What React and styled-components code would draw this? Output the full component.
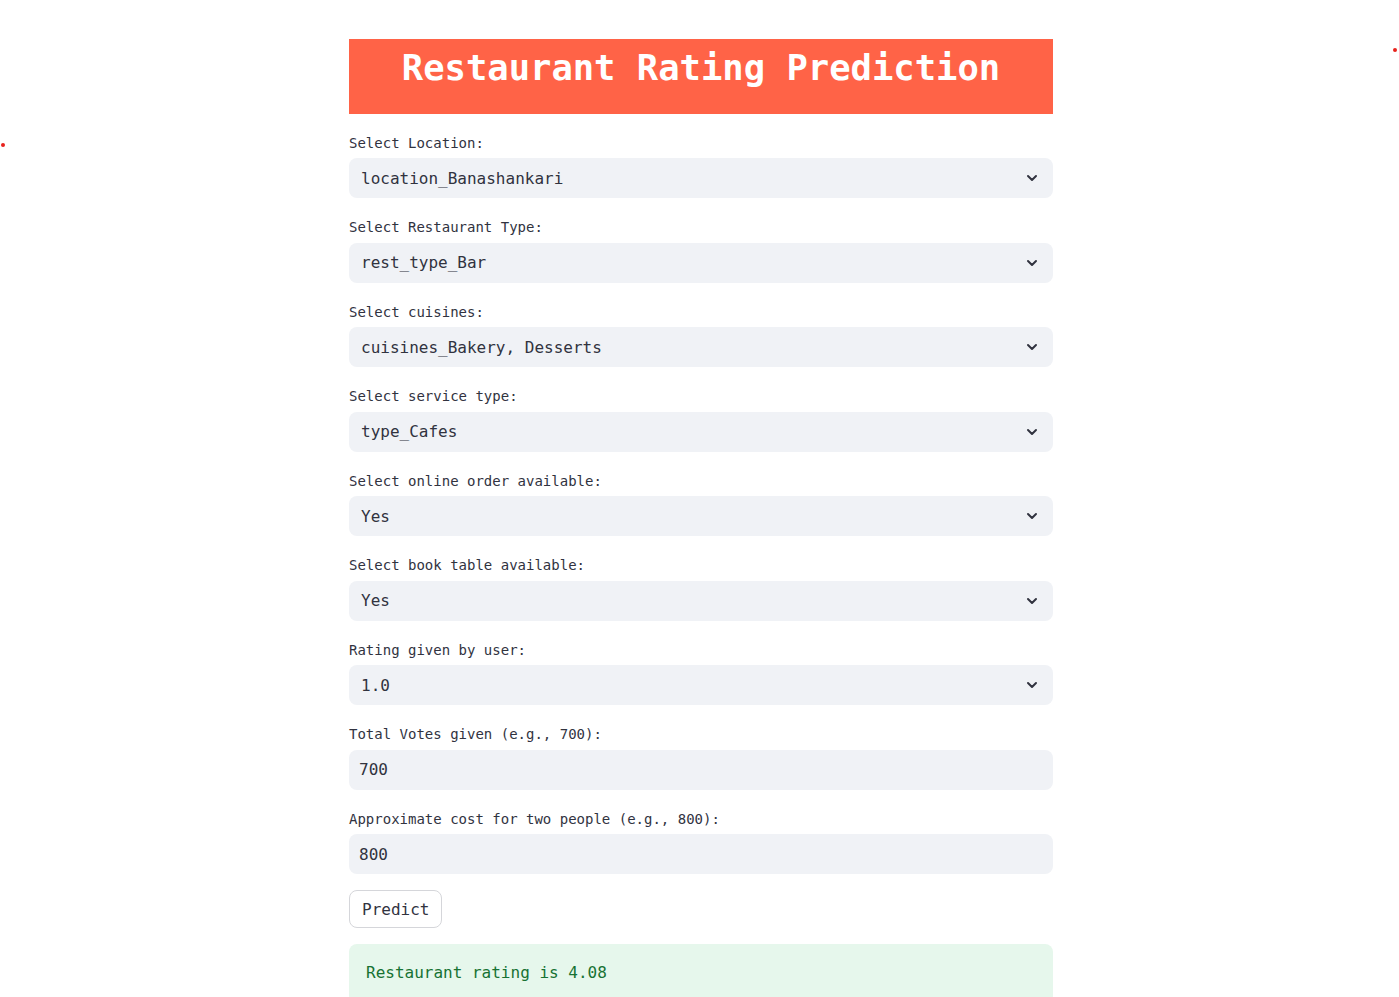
import React from 'react';
import styled, { createGlobalStyle } from 'styled-components';

const GlobalStyle = createGlobalStyle`
  html, body {
    margin: 0;
    padding: 0;
    background: #ffffff;
  }
  body {
    font-family: "DejaVu Sans Mono", "Liberation Mono", monospace;
    color: #31333f;
  }
`;

const Page = styled.main`
  position: relative;
  min-height: 997px;
  display: flex;
  justify-content: center;
  padding: 39px 0 0 3px;
  box-sizing: border-box;
  overflow: hidden;
`;

const Column = styled.div`
  width: 704px;
  display: flex;
  flex-direction: column;
  gap: 16px;
`;

const Banner = styled.div`
  background-color: #ff6347;
  height: 74.5px;
  display: flex;
  justify-content: center;
  padding-top: 9px;
  box-sizing: border-box;
`;

const Title = styled.h1`
  margin: 0;
  color: #ffffff;
  font-size: 35.5px;
  font-weight: bold;
  line-height: 40px;
  letter-spacing: 0;
`;

const Field = styled.div`
  display: flex;
  flex-direction: column;
`;

const Label = styled.label`
  font-size: 14px;
  line-height: 25px;
  padding-top: 1px;
  margin-bottom: 2.5px;
  color: #31333f;
`;

const Box = styled.div`
  height: 40px;
  border-radius: 8px;
  background-color: #f0f2f6;
  display: flex;
  align-items: center;
  justify-content: space-between;
  padding: 0 ${p => (p.$select ? '15px 0 12px' : '10px')};
  box-sizing: border-box;
  font-size: 16px;
  color: #31333f;
`;

const Chevron = styled.svg`
  width: 12px;
  height: 12px;
`;

const Button = styled.button`
  align-self: flex-start;
  height: 38px;
  padding: 0 12px;
  border: 1px solid #d5d6da;
  border-radius: 8px;
  background: #ffffff;
  font-family: inherit;
  font-size: 16px;
  color: #31333f;
  cursor: pointer;
`;

const Success = styled.div`
  background-color: #e6f7ec;
  border-radius: 8px;
  padding: 16px 16px 16px 17px;
  height: 60px;
  box-sizing: border-box;
  font-size: 16px;
  line-height: 25px;
  color: #177233;
`;

const Dot = styled.span`
  position: absolute;
  width: 4px;
  height: 4px;
  border-radius: 50%;
  background: #e8221c;
  left: ${p => p.$x}px;
  top: ${p => p.$y}px;
`;

const selects = [
  ['Select Location:', 'location_Banashankari'],
  ['Select Restaurant Type:', 'rest_type_Bar'],
  ['Select cuisines:', 'cuisines_Bakery, Desserts'],
  ['Select service type:', 'type_Cafes'],
  ['Select online order available:', 'Yes'],
  ['Select book table available:', 'Yes'],
  ['Rating given by user:', '1.0'],
];

const inputs = [
  ['Total Votes given (e.g., 700):', '700'],
  ['Approximate cost for two people (e.g., 800):', '800'],
];

function App() {
  return (
    <>
      <GlobalStyle />
      <Page>
        <Dot $x={1} $y={143} />
        <Dot $x={1393} $y={48} />
        <Column>
          <Banner>
            <Title>Restaurant Rating Prediction</Title>
          </Banner>

          {selects.map(([label, value]) => (
            <Field key={label}>
              <Label>{label}</Label>
              <Box $select>
                <span>{value}</span>
                <Chevron viewBox="0 0 12 12">
                  <path d="M2 4 L6 8 L10 4" fill="none" stroke="#31333f" strokeWidth="2" strokeLinecap="round" strokeLinejoin="round" />
                </Chevron>
              </Box>
            </Field>
          ))}

          {inputs.map(([label, value]) => (
            <Field key={label}>
              <Label>{label}</Label>
              <Box>
                <span>{value}</span>
              </Box>
            </Field>
          ))}

          <Button>Predict</Button>

          <Success>Restaurant rating is 4.08</Success>
        </Column>
      </Page>
    </>
  );
}

export default App;
